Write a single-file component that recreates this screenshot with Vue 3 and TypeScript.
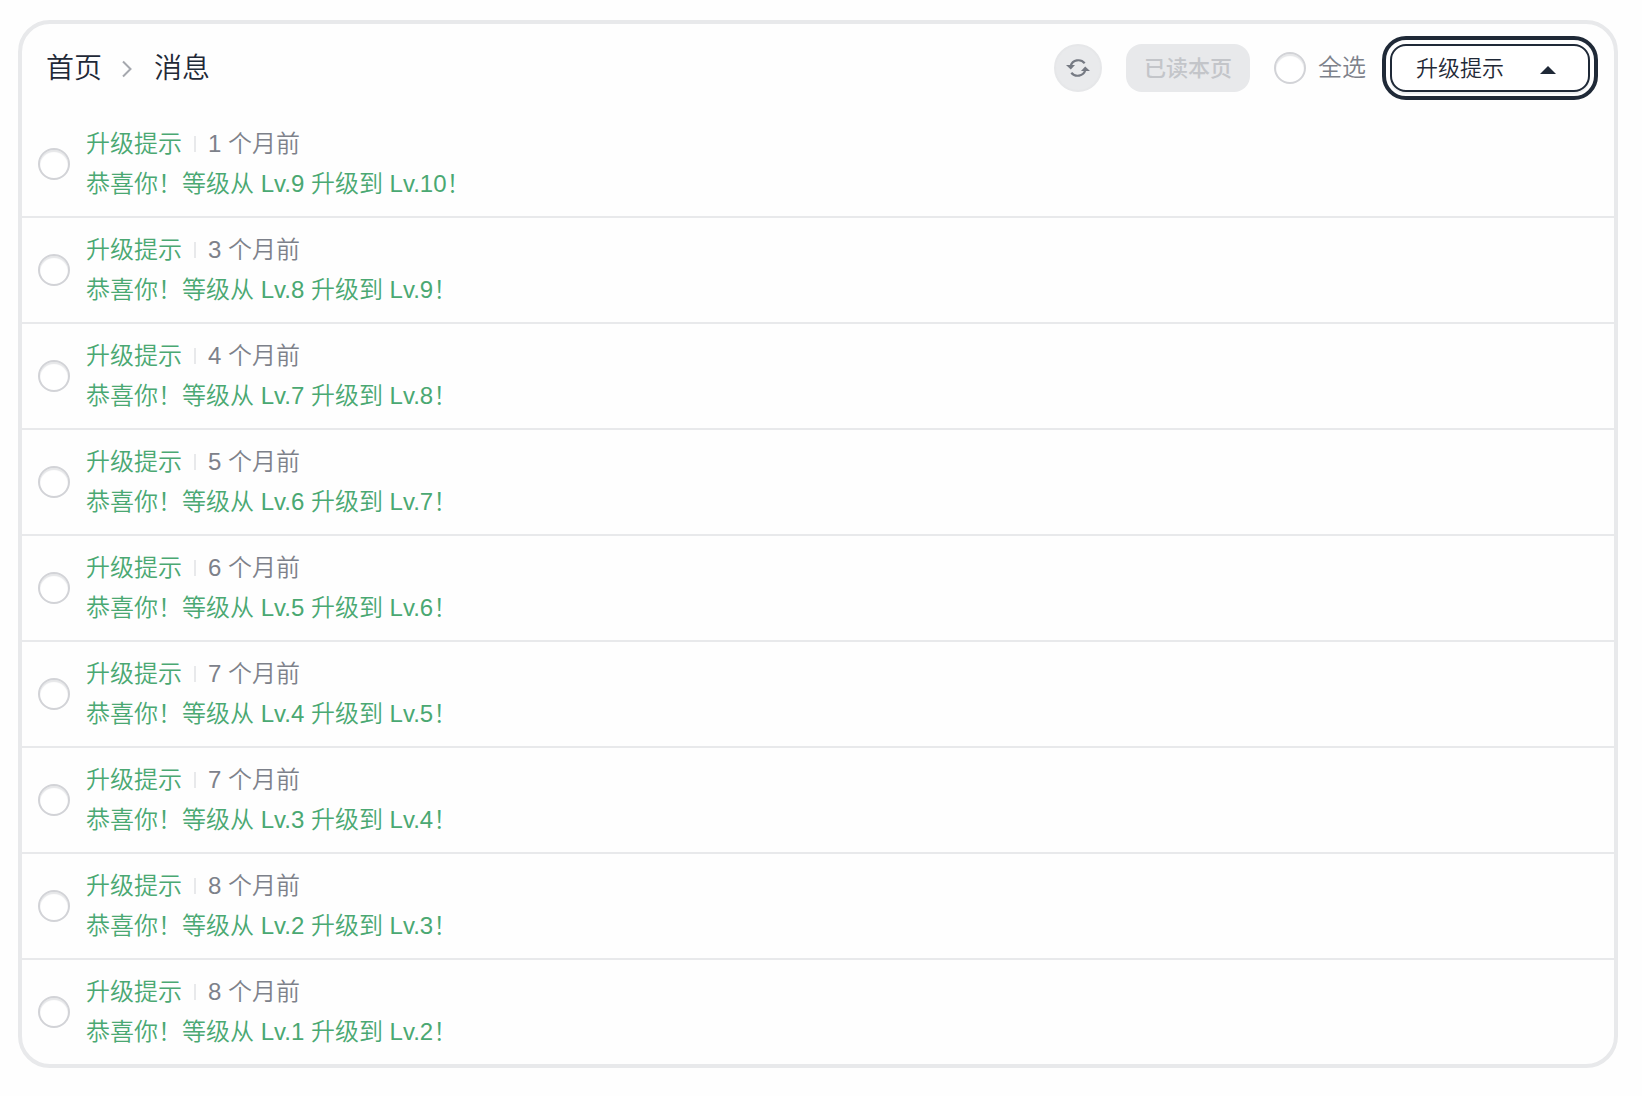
<script setup lang="ts">
import { ref } from 'vue'

interface Message {
  id: number
  kind: string
  ago: string
  from: number
  to: number
}

const months = [1, 3, 4, 5, 6, 7, 7, 8, 8]
const messages: Message[] = months.map((m, i) => ({
  id: i,
  kind: '升级提示',
  ago: `${m} 个月前`,
  from: 9 - i,
  to: 10 - i,
}))

const selected = ref<number[]>([])
const kind = ref('升级提示')

function toggleAll(e: Event) {
  selected.value = (e.target as HTMLInputElement).checked ? messages.map((m) => m.id) : []
}
</script>

<template>
  <main class="card">
    <header class="head">
      <nav class="crumbs" aria-label="面包屑">
        <a href="#">首页</a>
        <svg class="chevron" viewBox="0 0 12 18" aria-hidden="true">
          <path d="M1 1.5 8.5 9 1 16.5" fill="none" stroke="#a5a8ae" stroke-width="2" />
        </svg>
        <span>消息</span>
      </nav>
      <div class="tools">
        <button class="refresh" type="button" aria-label="刷新">
          <svg viewBox="0 0 24 20" aria-hidden="true">
            <path d="M4.6 8A8.2 8.2 0 0 1 18.7 5.2M19.4 12A8.2 8.2 0 0 1 5.3 14.8" fill="none" stroke="#767a83" stroke-width="2.2" />
            <path d="M0 7h9L4.8 11.6zM24 13h-9l4.2-4.6z" fill="#767a83" />
          </svg>
        </button>
        <button class="read" type="button" disabled>已读本页</button>
        <label class="all">
          <input class="check" type="checkbox" @change="toggleAll" />
          <span>全选</span>
        </label>
        <div class="picker">
          <select v-model="kind" aria-label="消息类型">
            <option>升级提示</option>
          </select>
          <svg class="caret" viewBox="0 0 16 8" aria-hidden="true">
            <path d="M0 8 8 0l8 8z" fill="#1f2937" />
          </svg>
        </div>
      </div>
    </header>
    <ul class="list">
      <li v-for="m in messages" :key="m.id" class="row">
        <input :id="`msg-${m.id}`" v-model="selected" class="check" type="checkbox" :value="m.id" />
        <label class="body" :for="`msg-${m.id}`">
          <span class="meta">
            <span>{{ m.kind }}</span>
            <span class="bar"></span>
            <time>{{ m.ago }}</time>
          </span>
          <span>恭喜你！等级从 Lv.{{ m.from }} 升级到 Lv.{{ m.to }}！</span>
        </label>
      </li>
    </ul>
  </main>
</template>

<style>
body {
  background: #fefefe;
}
</style>

<style scoped>
.card,
.card * {
  box-sizing: border-box;
}
.card {
  margin: 20px 24px 28px 18px;
  border: 4px solid #e8e9eb;
  border-radius: 32px;
  background: #fefefe;
  color: #1f2937;
  font-family: 'Liberation Sans', 'Noto Sans CJK SC', sans-serif;
  font-size: 24px;
  font-weight: 350;
  line-height: 40px;
}
.head {
  display: flex;
  align-items: center;
  justify-content: space-between;
  height: 88px;
  padding: 0 24px;
}
.crumbs {
  display: flex;
  align-items: center;
  gap: 20px;
  padding-top: 2px;
  font-size: 28px;
}
.crumbs a {
  color: inherit;
  text-decoration: none;
}
.chevron {
  width: 12px;
  height: 18px;
}
.tools {
  display: flex;
  align-items: center;
  gap: 24px;
}
button,
select {
  margin: 0;
  font: inherit;
  font-size: 22px;
}
.refresh {
  display: flex;
  align-items: center;
  justify-content: center;
  width: 48px;
  height: 48px;
  padding: 0;
  border: 2px solid #e6e7e9;
  border-radius: 50%;
  background: #e9eaec;
}
.refresh svg {
  width: 24px;
  height: 20px;
}
.read {
  height: 48px;
  padding: 2px 18px 0;
  border: 0;
  border-radius: 16px;
  background: #e8e9eb;
  color: #c3c5c9;
  font-weight: 500;
}
.all {
  display: flex;
  align-items: center;
  gap: 12px;
  color: #7d818a;
}
.check {
  flex: none;
  appearance: none;
  width: 32px;
  height: 32px;
  margin: 0;
  border: 2px solid #d2d3d7;
  border-radius: 50%;
  background: #fff;
  box-shadow: inset 0 2px 1px #e6e7e9;
}
.check:checked {
  background: #4aa872;
}
.picker {
  position: relative;
}
.picker select {
  display: block;
  appearance: none;
  width: 200px;
  height: 48px;
  padding: 2px 24px 0;
  border: 2px solid #1f2937;
  border-radius: 16px;
  outline: 4px solid #1f2937;
  outline-offset: 4px;
  background: #fff;
  color: #1f2937;
  box-shadow: 0 2px 1px #eceef0;
}
.caret {
  position: absolute;
  top: 22px;
  right: 34px;
  width: 16px;
  height: 8px;
  pointer-events: none;
}
.list {
  margin: 0;
  padding: 0;
  list-style: none;
}
.row {
  display: flex;
  align-items: center;
  gap: 16px;
  padding: 12px 16px;
}
.row + .row {
  border-top: 2px solid #e8e9eb;
}
.body {
  display: flex;
  flex-direction: column;
  color: #4aa872;
}
.meta {
  display: flex;
  align-items: center;
  gap: 12px;
}
.bar {
  width: 2px;
  height: 16px;
  background: #e8e9eb;
}
time {
  color: #7d818a;
}
</style>
